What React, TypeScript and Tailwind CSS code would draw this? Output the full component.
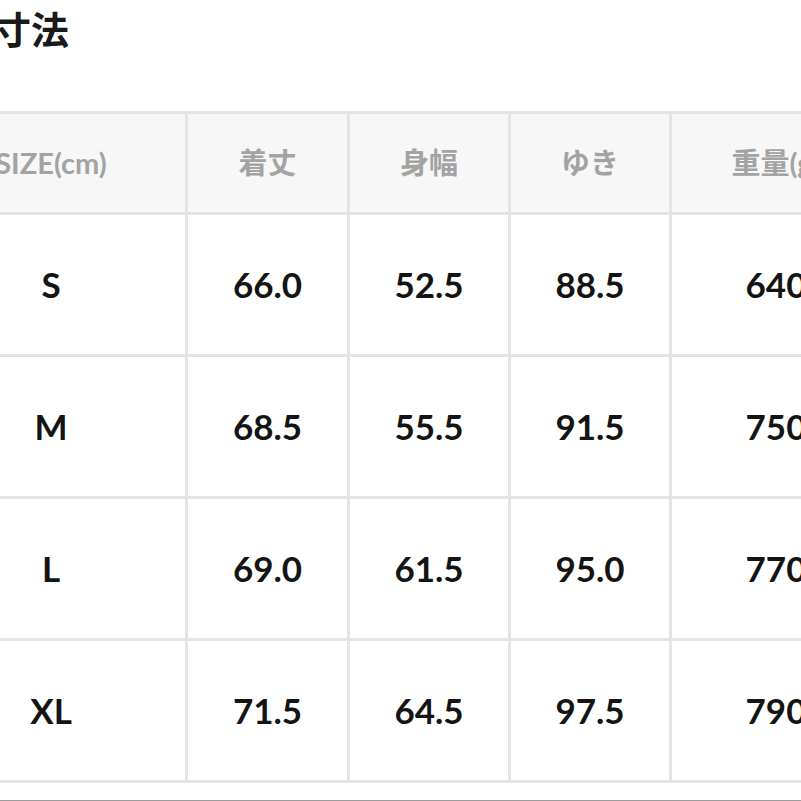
import React from "react";

const rows = [
  ["S", "66.0", "52.5", "88.5", "640"],
  ["M", "68.5", "55.5", "91.5", "750"],
  ["L", "69.0", "61.5", "95.0", "770"],
  ["XL", "71.5", "64.5", "97.5", "790"],
];

const headers = ["SIZE(cm)", "着丈", "身幅", "ゆき", "重量(g)"];

export default function App() {
  return (
    <div
      className="w-[801px] h-[801px] overflow-hidden bg-white flex flex-col"
      style={{ fontFamily: '"Lato", "Noto Sans CJK JP", sans-serif' }}
    >
      <div className="ml-[-7px] mt-[10px] h-[38px] text-[38px] leading-[38px] font-bold text-[#1a1a1a] whitespace-nowrap">
        寸法
      </div>
      <div className="mt-[63px] ml-[-86px] w-max bg-[#e4e4e4] p-[3px] grid grid-cols-[268px_159px_158px_158px_208px] grid-rows-[98px_139px_139px_139px_139px] gap-[3px]">
        {headers.map((h) => (
          <div
            key={h}
            className="bg-[#f7f7f7] flex items-center justify-center text-[29px] font-bold text-[#a3a3a3] whitespace-nowrap"
          >
            {h}
          </div>
        ))}
        {rows.map((r) =>
          r.map((c, i) => (
            <div
              key={r[0] + i}
              className="bg-white flex items-center justify-center text-[35px] font-bold text-[#141414] whitespace-nowrap"
            >
              {c}
            </div>
          ))
        )}
      </div>
      <div className="mt-[17px] h-px w-full bg-[#9c9c9c]" />
    </div>
  );
}
